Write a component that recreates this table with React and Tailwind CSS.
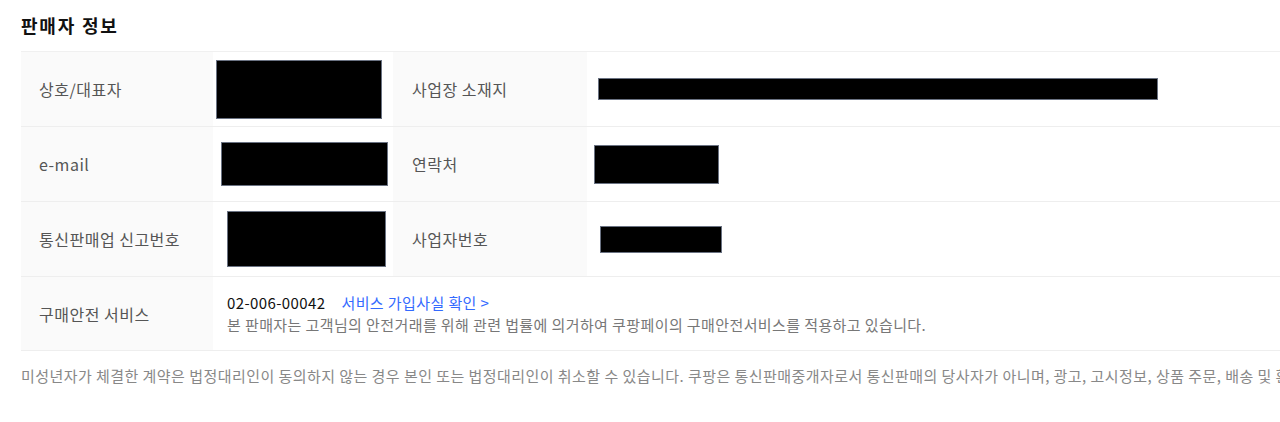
const rows = [
  {
    label1: '상호/대표자',
    box1: 'ml-[3px] h-[59px] w-[166px]',
    label2: '사업장 소재지',
    box2: 'ml-[11px] h-[22px] w-[560px]',
  },
  {
    label1: 'e-mail',
    box1: 'ml-[8px] h-[44px] w-[167px]',
    label2: '연락처',
    box2: 'ml-[7px] h-[39px] w-[125px]',
  },
  {
    label1: '통신판매업 신고번호',
    box1: 'ml-[14px] h-[56px] w-[159px]',
    label2: '사업자번호',
    box2: 'ml-[13px] h-[27px] w-[122px]',
  },
];

function Redacted({ className }) {
  return <div className={`border border-gray-500 bg-black ${className}`} />;
}

const labelCls = 'flex items-center bg-[#fafafa] text-[16px] tracking-[0.5px] text-[#555]';

export default function App() {
  return (
    <div
      className="overflow-hidden bg-white pl-[21px] text-[15px] tracking-[0.4px]"
      style={{ fontFamily: '"Malgun Gothic", "Noto Sans CJK KR", sans-serif' }}
    >
      <h2 className="pt-[12px] text-[18px] font-bold leading-[26px] tracking-[1.8px] text-[#111]">판매자 정보</h2>

      <div className="mt-[13px] w-[1280px] border-t border-[#f0f0f0]">
        {rows.map((row) => (
          <div
            key={row.label1}
            className="grid h-[75px] grid-cols-[192px_180px_194px_1fr] border-b border-[#eeeeee]"
          >
            <div className={`${labelCls} pl-[18px]`}>{row.label1}</div>
            <div className="flex items-center">
              <Redacted className={row.box1} />
            </div>
            <div className={`${labelCls} pl-[19px]`}>{row.label2}</div>
            <div className="flex items-center">
              <Redacted className={row.box2} />
            </div>
          </div>
        ))}

        <div className="grid h-[74px] grid-cols-[192px_1fr] border-b border-[#eeeeee]">
          <div className={`${labelCls} pl-[18px]`}>구매안전 서비스</div>
          <div className="flex flex-col justify-center pl-[14px] leading-[22px]">
            <div className="text-[#111]">
              02-006-00042
              <a href="#" className="ml-[16px] text-[#346aff]">
                서비스 가입사실 확인 &gt;
              </a>
            </div>
            <div className="text-[#777]">
              본 판매자는 고객님의 안전거래를 위해 관련 법률에 의거하여 쿠팡페이의 구매안전서비스를 적용하고 있습니다.
            </div>
          </div>
        </div>
      </div>

      <p className="mt-[14px] whitespace-nowrap tracking-[0.45px] text-[#888]">
        미성년자가 체결한 계약은 법정대리인이 동의하지 않는 경우 본인 또는 법정대리인이 취소할 수 있습니다. 쿠팡은 통신판매중개자로서 통신판매의 당사자가 아니며, 광고, 고시정보, 상품 주문, 배송 및 환불의 의무와 책임은 각 판매자에게 있습니다.
      </p>
      <div className="h-[36px]" />
    </div>
  );
}
